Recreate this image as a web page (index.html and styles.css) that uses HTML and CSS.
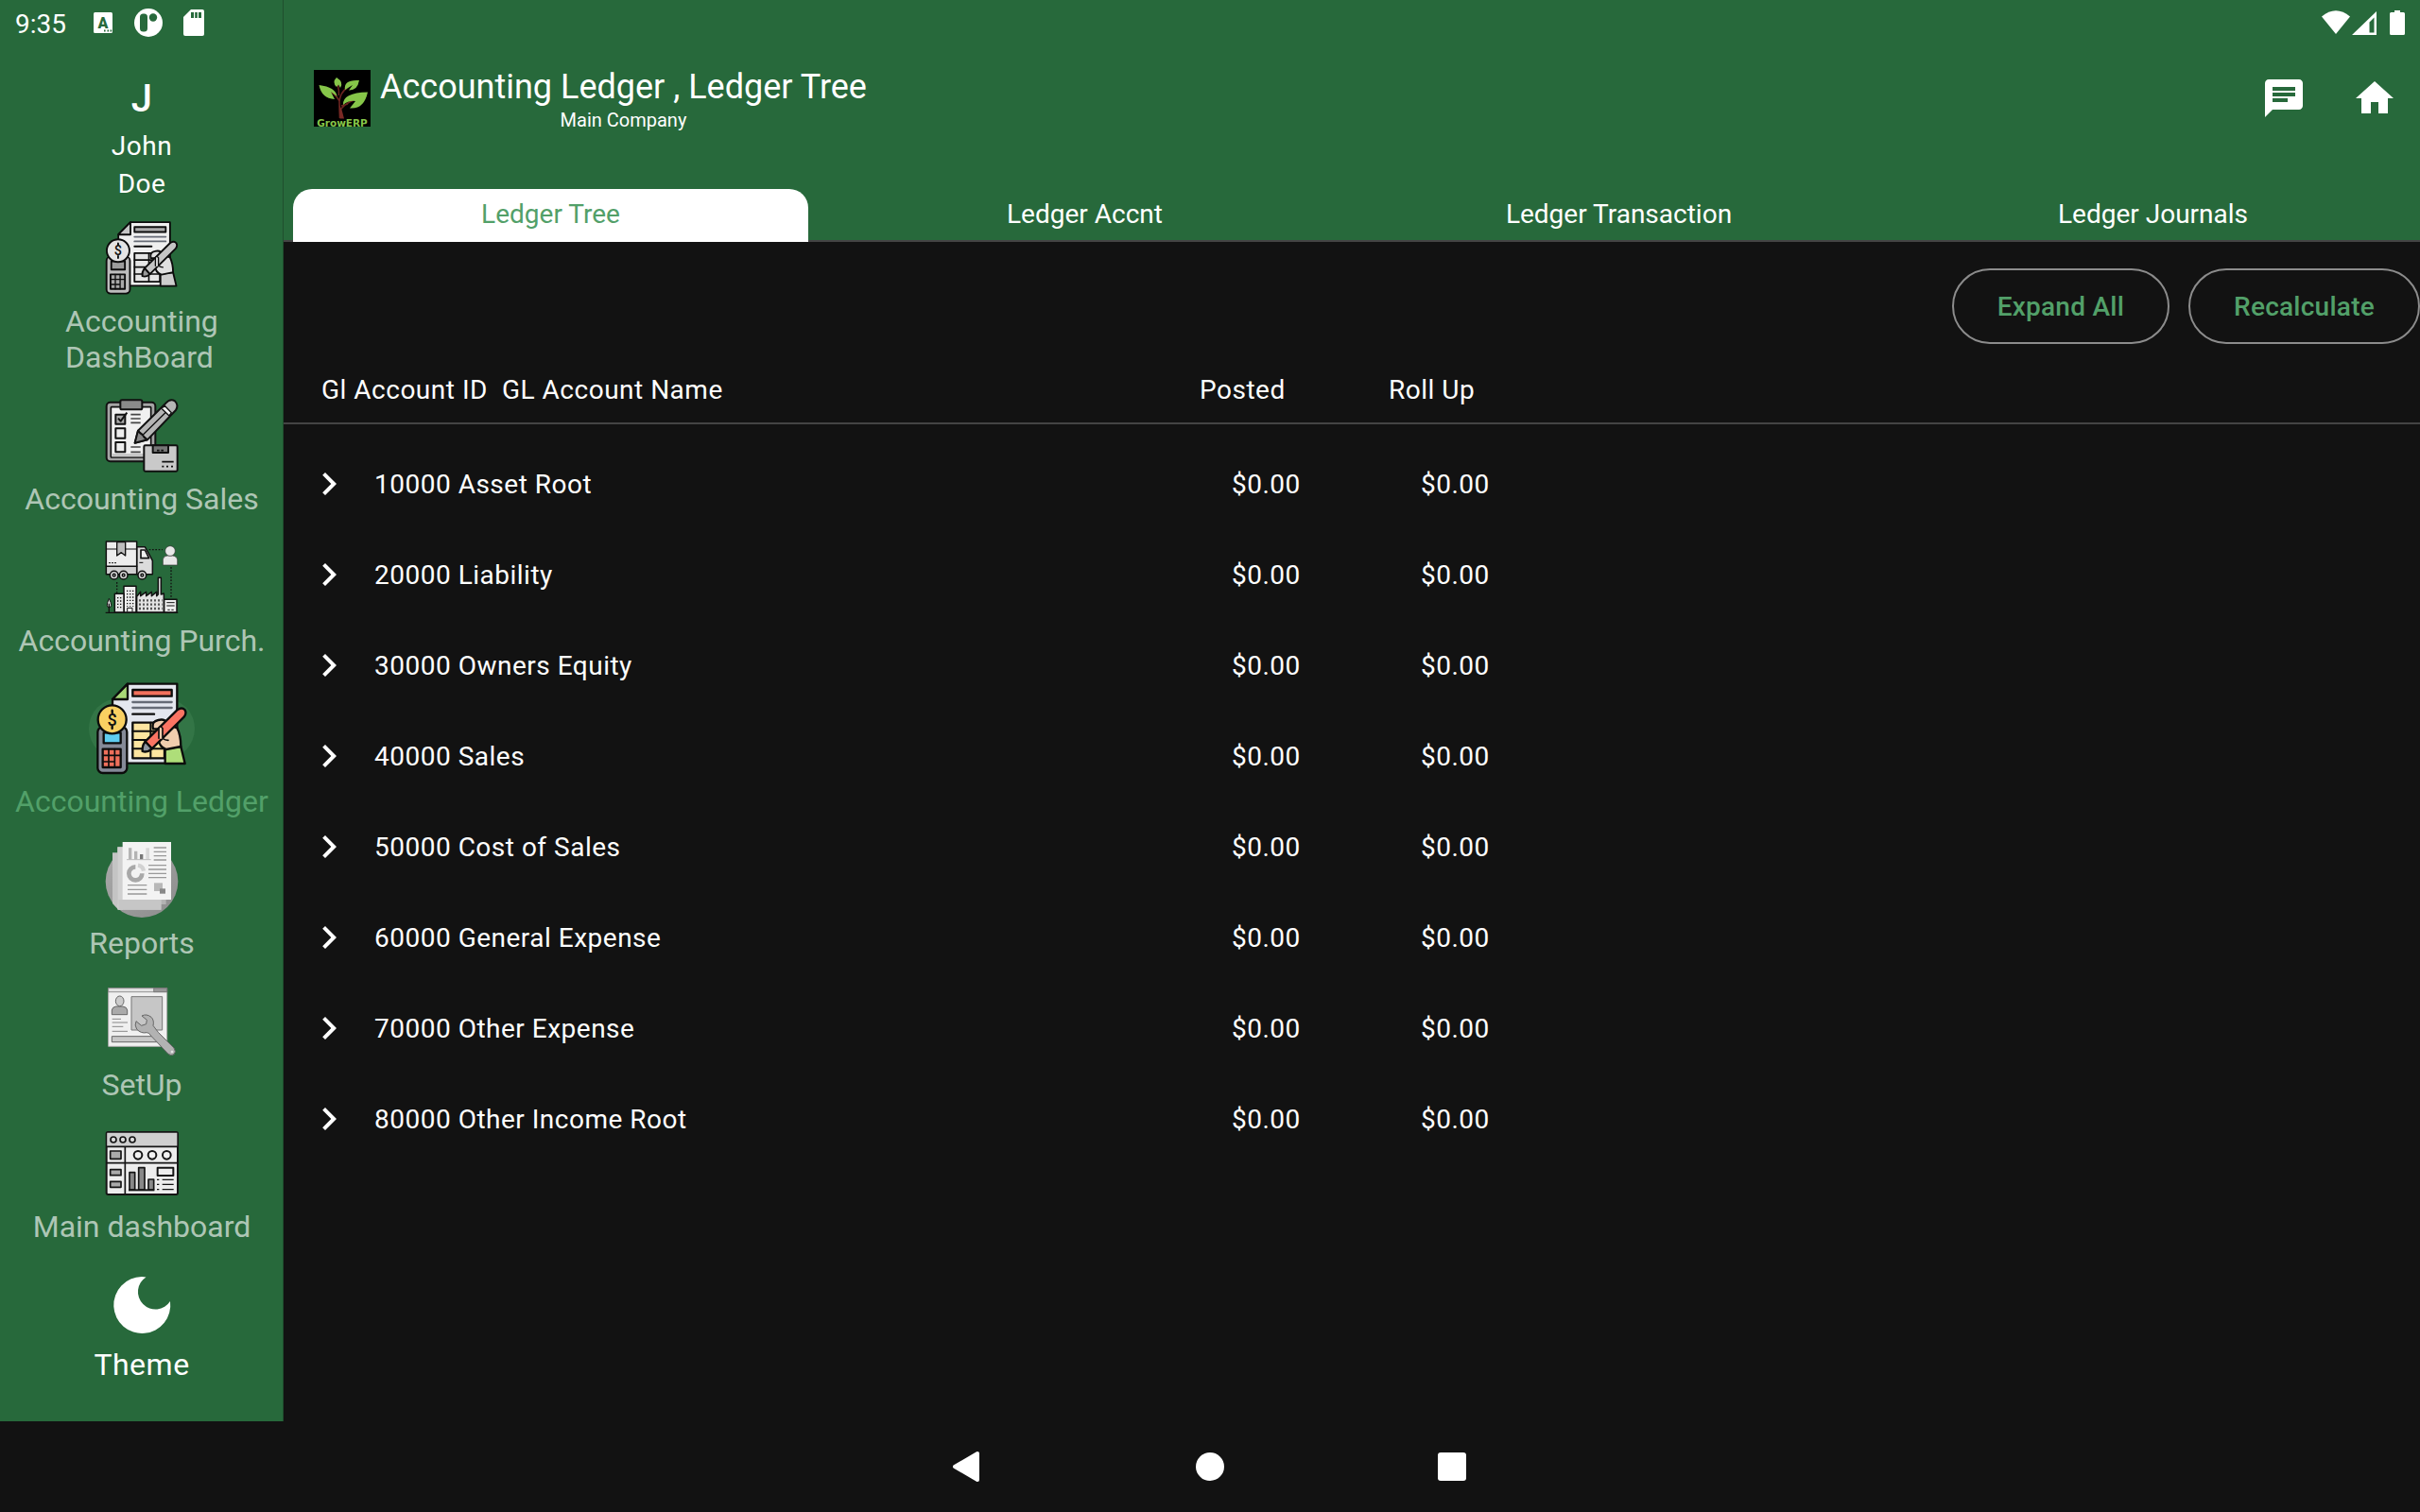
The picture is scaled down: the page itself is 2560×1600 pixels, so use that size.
FILE: index.html
```html
<!DOCTYPE html>
<html lang="en">
<head>
<meta charset="utf-8">
<title>Accounting Ledger</title>
<link rel="stylesheet" href="styles.css">
</head>
<body>
<svg class="defs" aria-hidden="true">
  <symbol id="ledger" viewBox="60 33 300 300">
    <g stroke="#0c0c0c" stroke-width="7" stroke-linejoin="round" stroke-linecap="round">
      <path class="paper" d="M165 41H322V293H165L117 290V90Z"/>
      <path class="fold" d="M165 41V90H117Z"/>
      <path class="bar" d="M181 60H305V80H181Z"/>
      <path class="grid" d="M181 164H282V277H181Z"/>
      <path class="line" d="M181 191H282M181 219H282M181 247H282M238 164V277" fill="none" stroke-width="6"/>
      <path class="rule" d="M181 99H305M181 117H305" fill="none"/>
      <path d="M181 137H249" fill="none"/>
      <path class="cuff" d="M284 246L334 240L347 294H284Z"/>
      <path class="skin" d="M246 184Q240 160 262 156Q286 150 292 170L322 181Q334 205 334 240L288 249Q262 240 264 214V184Z"/>
      <path class="pen" d="M221 224L322 124Q337 113 347 124Q353 135 344 146L242 247Z"/>
      <path class="skin" d="M264 214V182Q268 172 276 182V214Q284 220 294 220" stroke-width="5"/>
      <path class="nib" d="M221 224L242 247Q228 260 212 255Q210 238 221 224Z"/>
      <rect class="calc" x="70" y="178" width="93" height="146" rx="16"/>
      <path class="screen" d="M89 196H143V229H89Z"/>
      <path class="keys" d="M86 248H143V306H86Z"/>
      <path d="M105 248V306M124 248V290M86 268H143M86 288H124M124 306V272" fill="none" stroke-width="5"/>
      <circle class="coin" cx="116" cy="154" r="45"/>
      <path d="M116 125V132M116 176V183" fill="none"/>
    </g>
    <text class="dollar" x="116" y="173" font-size="54">$</text>
  </symbol>
</svg>

<div class="screen-root">
  <header class="status">
    <div class="status-left">
      <span class="clock">9:35</span>
      <svg class="st-a" viewBox="0 0 20 22"><rect width="20" height="22" rx="1.5" fill="#fff"/><text x="10" y="16.5" class="st-letter">A</text><path d="M11 19.500h1.600M14.500 19.500h1.600M17.600 19.500h1.600" stroke="#27693b" stroke-width="1.800"/></svg>
      <svg class="st-p" viewBox="0 0 30 30"><circle cx="15" cy="15" r="15" fill="#fff"/><rect x="6" y="5.500" width="8" height="19" rx="3.500" fill="#27693b"/><circle cx="20" cy="9.500" r="4.200" fill="#27693b"/></svg>
      <svg class="st-sd" viewBox="0 0 22 28"><path d="M8 0H20a2 2 0 0 1 2 2V26a2 2 0 0 1-2 2H2a2 2 0 0 1-2-2V8Z" fill="#fff"/><path d="M8 3h3v6H8zM12.200 3h2.600v6h-2.600zM16 3h3v6h-3z" fill="#27693b"/></svg>
    </div>
    <svg class="status-right" viewBox="0 0 88 26" fill="#fff"><path d="M0 6.500Q15-6 30 6.500L15 25Z"/><path fill-rule="evenodd" d="M58 1V26H32ZM55.500 7.500L50.500 12.500V23.500H55.500Z"/><path d="M77 0h6v2h3.500a1.500 1.500 0 0 1 1.500 1.500V24.500a1.500 1.500 0 0 1-1.500 1.500h-13a1.500 1.500 0 0 1-1.500-1.500V3.500a1.500 1.500 0 0 1 1.500-1.500h3.500z"/></svg>
  </header>

  <div class="app">
    <nav class="rail">
      <div class="user">
        <div class="avatar">J</div>
        <div>John</div>
        <div>Doe</div>
      </div>
      <a class="item"><svg class="ico gray" viewBox="0 0 80 80"><use href="#ledger"/></svg><span class="lbl two">Accounting DashBoard</span></a>
      <a class="item">
        <svg class="ico" viewBox="90 33 240 240" stroke="#111" stroke-width="6" stroke-linejoin="round">
          <rect x="98" y="47" width="155" height="188" rx="12" fill="#a5a5a5"/>
          <rect x="112" y="62" width="127" height="160" rx="2" fill="#f0f0f0" stroke-width="5"/>
          <path d="M115 210H238V220H115Z" fill="#c8c8c8" stroke="none"/>
          <rect x="142" y="40" width="69" height="30" rx="5" fill="#8a8a8a"/>
          <path d="M127 86H157V116H127Z" fill="#a8a8a8"/><path d="M127 130H157V161H127ZM127 174H157V205H127Z" fill="#eee"/>
          <path d="M135 98L143 107L163 80" fill="none"/>
          <path d="M175 86H206M175 99H206M175 112H206M175 189H206M175 205H206" stroke="#444" stroke-width="5"/>
          <path d="M188 176L198 137L286 50Q300 34 315 43Q328 56 318 72L228 166Z" fill="#b5b5b5"/>
          <path d="M198 137L228 166M214 150L287 78" fill="none" stroke-width="4"/>
          <path d="M188 176L198 137Q204 146 212 150Q216 160 228 166Z" fill="#888"/>
          <path d="M272 66L284 59L304 80L297 90Z" fill="#f2f2f2" stroke-width="4"/>
          <rect x="217" y="184" width="106" height="82" rx="4" fill="#c9c9c9"/>
          <path d="M245 184H294V207H245Z" fill="#777"/>
          <path d="M258 200h8M271 200h8M274 236H311M274 251h6M288 251h6M303 251h6" fill="none" stroke-width="5"/>
        </svg><span class="lbl">Accounting Sales</span></a>
      <a class="item">
        <svg class="ico" viewBox="90 33 240 240" stroke="#111" stroke-width="4.500" stroke-linejoin="round">
          <path d="M194 56H220L240 92L244 100V143H194Z" fill="#dcdcdc"/>
          <path d="M97 118H194V143H97Z" fill="#cfcfcf"/>
          <path d="M97 39H194V118H97Z" fill="#ededed"/>
          <path d="M97 63H194M105 107h6M114 107h6M123 107h6" fill="none" stroke-width="3"/>
          <path d="M131 41H158V84L145 74L131 84Z" fill="#bdbdbd" stroke-width="4"/>
          <path d="M207 66H220L233 92H207Z" fill="#eee" stroke-width="5"/>
          <path d="M202 106H214" stroke-width="3"/>
          <g fill="#d6d6d6"><circle cx="122" cy="146" r="13"/><circle cx="152" cy="146" r="13"/><circle cx="211" cy="146" r="13"/></g>
          <g fill="#eee"><circle cx="122" cy="146" r="4"/><circle cx="152" cy="146" r="4"/><circle cx="211" cy="146" r="4"/></g>
          <path d="M233 65H276M303 120V218M131 168V204" fill="none" stroke-dasharray="5 5" stroke-width="4"/>
          <path d="M277 114V96Q279 84 292 84H308Q322 86 323 98V114Z" fill="#e8e8e8" stroke="#333" stroke-width="2"/>
          <circle cx="300" cy="69" r="16" fill="#e8e8e8" stroke="#333" stroke-width="2"/>
          <path d="M153 264V181H192V264Z" fill="#eee"/><path d="M124 264V205H153V264Z" fill="#e6e6e6"/>
          <path d="M194 264V214L206 199V212L224 199V212L241 199V212L257 199V212L262 207V154H271V207L280 204V264Z" fill="#e2e2e2"/>
          <path d="M281 264V223H321V264Z" fill="#eee"/>
          <path d="M164 194V246M173 194V246M182 194V246M134 216V255M143 216V255" fill="none" stroke-dasharray="4 6" stroke-width="4"/>
          <path d="M201 226H275M201 239H275M201 252H275" fill="none" stroke="#555" stroke-dasharray="6 6" stroke-width="7"/>
          <path d="M289 233H314M289 243H314M292 256h7M304 256h7M164 262V250H180V262" fill="none" stroke-width="3"/>
          <path d="M106 220Q120 248 106 248Q94 248 106 220Z" fill="#ddd" stroke-width="3"/>
          <path d="M106 236V264M95 265H325" fill="none" stroke-width="4"/>
        </svg><span class="lbl">Accounting Purch.</span></a>
      <a class="item active"><span class="pill"><svg class="ico big color" viewBox="0 0 100 100"><use href="#ledger"/></svg></span><span class="lbl">Accounting Ledger</span></a>
      <a class="item">
        <svg class="ico" viewBox="90 33 240 240">
          <defs><linearGradient id="disc" x1="0" y1="0" x2="1" y2="1"><stop offset="0" stop-color="#ababab"/><stop offset="1" stop-color="#8c8c8c"/></linearGradient></defs>
          <circle cx="210" cy="158" r="115" fill="url(#disc)"/>
          <path d="M117 67H270V248H136L117 228Z" fill="#c4c4c4"/><path d="M133 49H287V231H133Z" fill="#b3b3b3"/><path d="M133 49H150V248H133Z" fill="#d0d0d0"/><path d="M136 216H272V248H136Z" fill="#c6c6c6"/>
          <path d="M149 33H303V216H149Z" fill="#f3f3f3"/>
          <path d="M168 52h10v37h-10zM186 62h10v27h-10z" fill="#b4b4b4"/><path d="M204 72h10v17h-10z" fill="#777"/><path d="M223 52h11v37h-11z" fill="#d8d8d8"/>
          <path d="M162 89H239" stroke="#bbb" stroke-width="3"/>
          <path d="M248 51H288M248 64H288M248 77H288M248 90H288M231 107H288M231 120H288M231 133H288M231 146H288M165 170H226M165 184H226M165 198H226" stroke="#999" stroke-width="4"/>
          <path d="M190 112A21 21 0 1 0 211 133" fill="none" stroke="#a8a8a8" stroke-width="14"/>
          <path d="M198 107A22 22 0 0 1 216 125" fill="none" stroke="#d2d2d2" stroke-width="13"/>
          <path d="M249 163H276V189H249Z" fill="#b8b8b8"/><path d="M267 181H285V197H267Z" fill="#888"/>
        </svg><span class="lbl">Reports</span></a>
      <a class="item">
        <svg class="ico" viewBox="90 18 240 240" stroke="#666" stroke-width="3" stroke-linejoin="round">
          <path d="M104 32H290V217H104Z" fill="#f0f0f0" stroke="#aaa"/>
          <path d="M104 32H290V44H104Z" fill="#e4e4e4" stroke-width="2"/><path d="M248 32H290V44H248Z" fill="#999" stroke-width="2"/>
          <path d="M177 59H275V165H177Z" fill="#c6c6c6" stroke="#777"/>
          <path d="M115 116V102Q116 92 128 90H150Q163 92 164 102V116Z" fill="#aaa"/><ellipse cx="140" cy="73" rx="13" ry="16" fill="#ccc"/>
          <path d="M116 130H144M116 141H165M116 154H151M116 169H165" stroke="#888"/>
          <path d="M115 185H268V203H115Z" fill="#c8c8c8"/>
          <path d="M210 120Q225 112 240 124Q250 134 246 151L262 172L312 222Q320 234 312 242Q302 248 293 240L240 184Q232 172 226 173Q207 177 194 162Q186 150 192 137L209 151L224 146L226 133Z" fill="#b2b2b2"/>
          <circle cx="306" cy="234" r="6" fill="#e5e5e5" stroke="#aaa"/>
        </svg><span class="lbl">SetUp</span></a>
      <a class="item">
        <svg class="ico" viewBox="90 468 240 240" stroke="#151515" stroke-width="6" stroke-linejoin="round">
          <rect x="98" y="489" width="226" height="198" rx="5" fill="#ededed"/>
          <path d="M100 491H322V534H100Z" fill="#cfcfcf" stroke="none"/>
          <path d="M98 535H324M98 587H324M157 535V687" stroke-width="5"/>
          <g fill="#ddd" stroke-width="5"><circle cx="120" cy="513" r="9"/><circle cx="150" cy="513" r="9"/><circle cx="180" cy="513" r="9"/></g>
          <g fill="#f2f2f2"><circle cx="198" cy="562" r="13"/><circle cx="243" cy="562" r="13"/><circle cx="289" cy="562" r="13"/></g>
          <path d="M110 549H144V574H110ZM110 608H144V626H110ZM110 646H144V664H110Z" fill="#aaa" stroke-width="5"/>
          <path d="M171 617H188V672H171ZM200 602H219V672H200ZM231 639H248V672H231Z" fill="#888" stroke-width="5"/>
          <path d="M168 673H250" /><path d="M260 602H310V627H260Z" fill="#eee"/>
          <path d="M258 640h7M275 640H311M258 655h7M275 655H311M258 671h7M275 671H311" stroke-width="4"/>
        </svg><span class="lbl">Main dashboard</span></a>
      <a class="theme"><svg viewBox="0 0 60 60"><path d="M30 0A30 30 0 1 0 60 26A18.500 18.500 0 1 1 34.500.4Q32 0 30 0Z" fill="#fff"/></svg><span>Theme</span></a>
    </nav>

    <main class="main">
      <div class="appbar">
        <div class="brand">
          <svg class="logo" viewBox="0 0 60 60"><rect width="60" height="60" fill="#000"/><path d="M27.500 51Q27 42 27 33Q24 27 18 23M27 33Q28 24 35 19M26.500 27Q27 22 25 15M28 42Q34 35 42 32M29 38L36 36" fill="none" stroke="#6b2420" stroke-width="1.600"/><path d="M27 37L27.500 51.500H32L29.500 42Z" fill="#7a2a25"/><g fill="#86c649"><path d="M5.500 16Q23 18 24.500 28L18 23L22 31Q8 30 5.500 16Z"/><path d="M24 8Q32 13 28 19L26 15.500L24 18Q19 13 24 8Z"/><path d="M33 21Q31 10 48 11Q46 22 37 21.500L41 16Z"/><path d="M31 37Q30 24 57 23.500Q53 42 38 40.500L44 33Q37 32 31 37Z"/></g><text class="logo-text" x="30" y="60">GrowERP</text></svg>
          <div class="titles"><div class="title">Accounting Ledger , Ledger Tree</div><div class="subtitle">Main Company</div></div>
        </div>
        <div class="actions">
          <svg viewBox="0 0 24 24"><path d="M20 2H4c-1.100 0-1.990.9-1.990 2L2 22l4-4h14c1.100 0 2-.9 2-2V4c0-1.100-.9-2-2-2zM6 9h12v2H6V9zm8 5H6v-2h8v2zm4-6H6V6h12v2z"/></svg>
          <svg viewBox="0 0 24 24"><path d="M10 20v-6h4v6h5v-8h3L12 3 2 12h3v8z"/></svg>
        </div>
      </div>
      <div class="tabs"><div class="tab on"><span>Ledger Tree</span></div><div class="tab"><span>Ledger Accnt</span></div><div class="tab"><span>Ledger Transaction</span></div><div class="tab"><span>Ledger Journals</span></div></div>
      <div class="buttons"><button>Expand All</button><button>Recalculate</button></div>
      <div class="thead"><span class="c-id">Gl Account ID</span><span class="c-name">GL Account Name</span><span class="c-post">Posted</span><span>Roll Up</span></div>
      <div class="rows">
        <div class="row"><svg viewBox="0 0 24 24"><path d="M8.590 16.590L13.170 12 8.590 7.410 10 6l6 6-6 6z"/></svg><span class="acct">10000 Asset Root</span><span class="amt">$0.00</span><span>$0.00</span></div>
        <div class="row"><svg viewBox="0 0 24 24"><path d="M8.590 16.590L13.170 12 8.590 7.410 10 6l6 6-6 6z"/></svg><span class="acct">20000 Liability</span><span class="amt">$0.00</span><span>$0.00</span></div>
        <div class="row"><svg viewBox="0 0 24 24"><path d="M8.590 16.590L13.170 12 8.590 7.410 10 6l6 6-6 6z"/></svg><span class="acct">30000 Owners Equity</span><span class="amt">$0.00</span><span>$0.00</span></div>
        <div class="row"><svg viewBox="0 0 24 24"><path d="M8.590 16.590L13.170 12 8.590 7.410 10 6l6 6-6 6z"/></svg><span class="acct">40000 Sales</span><span class="amt">$0.00</span><span>$0.00</span></div>
        <div class="row"><svg viewBox="0 0 24 24"><path d="M8.590 16.590L13.170 12 8.590 7.410 10 6l6 6-6 6z"/></svg><span class="acct">50000 Cost of Sales</span><span class="amt">$0.00</span><span>$0.00</span></div>
        <div class="row"><svg viewBox="0 0 24 24"><path d="M8.590 16.590L13.170 12 8.590 7.410 10 6l6 6-6 6z"/></svg><span class="acct">60000 General Expense</span><span class="amt">$0.00</span><span>$0.00</span></div>
        <div class="row"><svg viewBox="0 0 24 24"><path d="M8.590 16.590L13.170 12 8.590 7.410 10 6l6 6-6 6z"/></svg><span class="acct">70000 Other Expense</span><span class="amt">$0.00</span><span>$0.00</span></div>
        <div class="row"><svg viewBox="0 0 24 24"><path d="M8.590 16.590L13.170 12 8.590 7.410 10 6l6 6-6 6z"/></svg><span class="acct">80000 Other Income Root</span><span class="amt">$0.00</span><span>$0.00</span></div>
      </div>
    </main>
  </div>

  <footer class="sysnav">
    <svg viewBox="0 0 30 34"><path d="M25 3V31L1 17Z" fill="#fff" stroke="#fff" stroke-width="4" stroke-linejoin="round"/></svg>
    <svg viewBox="0 0 30 34"><circle cx="15" cy="17" r="15" fill="#fff"/></svg>
    <svg viewBox="0 0 30 34"><rect y="2" width="30" height="30" rx="3" fill="#fff"/></svg>
  </footer>
</div>
</body>
</html>
```
FILE: styles.css
```css
* { box-sizing: border-box; }
body { margin: 0; background: #121212; color: #fff; font-family: Roboto, "Liberation Sans", sans-serif; font-size: 28px; }
svg { display: block; flex: none; overflow: visible; }
.defs { position: absolute; width: 0; height: 0; overflow: hidden; }
.screen-root { width: 2560px; height: 1600px; display: flex; flex-direction: column; overflow: hidden; position: relative; }

.status { position: absolute; inset: 0 0 auto 0; height: 48px; display: flex; justify-content: space-between; z-index: 1; }
.status-left { display: flex; align-items: center; padding-left: 16px; }
.clock { width: 83px; line-height: 48px; padding-top: 3px; }
.st-a { width: 20px; height: 22px; margin-right: 23px; }
.st-letter { font: 900 16px Roboto, sans-serif; fill: #27693b; text-anchor: middle; }
.st-p { width: 30px; height: 30px; margin-right: 22px; }
.st-sd { width: 22px; height: 28px; }
.status-right { width: 88px; height: 26px; margin: 11px 16px 0 0; }

.app { height: 1504px; display: flex; }
.rail { width: 300px; background: #27693b; box-shadow: inset -1px 0 #1f4f2e; padding-top: 81px; display: flex; flex-direction: column; }
.user { height: 140px; text-align: center; line-height: 40px; letter-spacing: .5px; }
.avatar { font-size: 40px; font-weight: 500; line-height: 47px; margin-bottom: 7px; }
.item { display: flex; flex-direction: column; align-items: center; gap: 8px; padding: 12px 0; color: rgba(255,255,255,.64); font-size: 32px; line-height: 38px; }
.lbl { white-space: nowrap; }
.two { width: 162px; white-space: normal; }
.ico { width: 80px; height: 80px; }
.big { width: 100px; height: 100px; }
.pill { width: 112px; height: 64px; margin: 18px 0; display: flex; justify-content: center; align-items: center; background: #337546; border-radius: 32px; }
.active { color: #52a069; }
.theme { display: flex; flex-direction: column; align-items: center; padding-top: 22px; font-size: 32px; line-height: 38px; gap: 14px; letter-spacing: .5px; }
.theme svg { width: 60px; height: 60px; }

.color { --paper: #e4e7ef; --fold: #a9d977; --bar: #f2705c; --grid: #fde5a0; --cuff: #aede79; --skin: #f0cdae; --pen: #fb7463; --nib: #8d94a0; --calc: #858a98; --screen: #5fcdf0; --keys: #ef6f5b; --coin: #f9d062; }
.gray { --paper: #efefef; --fold: #c6c6c6; --bar: #aaa; --grid: #e6e6e6; --cuff: #cdcdcd; --skin: #e0e0e0; --pen: #c4c4c4; --nib: #999; --calc: #bdbdbd; --screen: #9c9c9c; --keys: #a8a8a8; --coin: #e4e4e4; }
.paper { fill: var(--paper); } .fold { fill: var(--fold); } .bar { fill: var(--bar); } .grid { fill: var(--grid); }
.cuff { fill: var(--cuff); } .skin { fill: var(--skin); } .pen { fill: var(--pen); } .nib { fill: var(--nib); }
.calc { fill: var(--calc); } .screen { fill: var(--screen); } .keys { fill: var(--keys); } .coin { fill: var(--coin); }
.rule { stroke: #666b76; }
.dollar { font-family: Roboto, sans-serif; font-weight: 500; fill: #111; text-anchor: middle; }

.main { flex: 1; display: flex; flex-direction: column; }
.appbar { height: 200px; background: #27693b; display: flex; justify-content: space-between; padding: 74px 24px 0 32px; }
.brand { display: flex; gap: 10px; align-items: flex-start; }
.logo { width: 60px; height: 60px; }
.logo-text { font: 700 10.500px "DejaVu Sans", sans-serif; fill: #86c649; text-anchor: middle; }
.titles { text-align: center; margin-top: -3px; }
.title { font-size: 36px; line-height: 43px; }
.subtitle { font-size: 20px; line-height: 24px; margin-top: 1px; }
.actions { display: flex; gap: 48px; padding-top: 6px; }
.actions svg { width: 48px; height: 48px; fill: #fff; }
.tabs { height: 56px; display: flex; background: #27693b; border-bottom: 2px solid #444; }
.tab { flex: 1; padding: 0 10px; height: 56px; text-align: center; line-height: 52px; }
.tab span { display: block; height: 56px; padding-top: 1px; border-radius: 20px 20px 0 0; }
.on span { background: #fff; color: #52a069; }
.buttons { display: flex; justify-content: flex-end; gap: 20px; padding-top: 28px; }
button { height: 80px; padding: 0 46px; border: 2px solid #8c8c8c; border-radius: 40px; background: none; color: #52a069; font: 500 28px Roboto, sans-serif; letter-spacing: .25px; }
.thead { height: 85px; display: flex; padding: 29px 0 0 40px; line-height: 40px; border-bottom: 2px solid #444; letter-spacing: .5px; }
.c-id { width: 191px; }
.c-name { width: 738px; }
.c-post { width: 200px; }
.rows { padding-top: 15px; }
.row { height: 96px; display: flex; align-items: center; padding-left: 24px; letter-spacing: .5px; }
.row svg { width: 48px; height: 48px; fill: #fff; margin-right: 24px; }
.acct { width: 907px; }
.amt { width: 200px; }

.sysnav { height: 96px; display: flex; justify-content: center; align-items: center; gap: 226px; }
.sysnav svg { width: 30px; height: 34px; }
```
